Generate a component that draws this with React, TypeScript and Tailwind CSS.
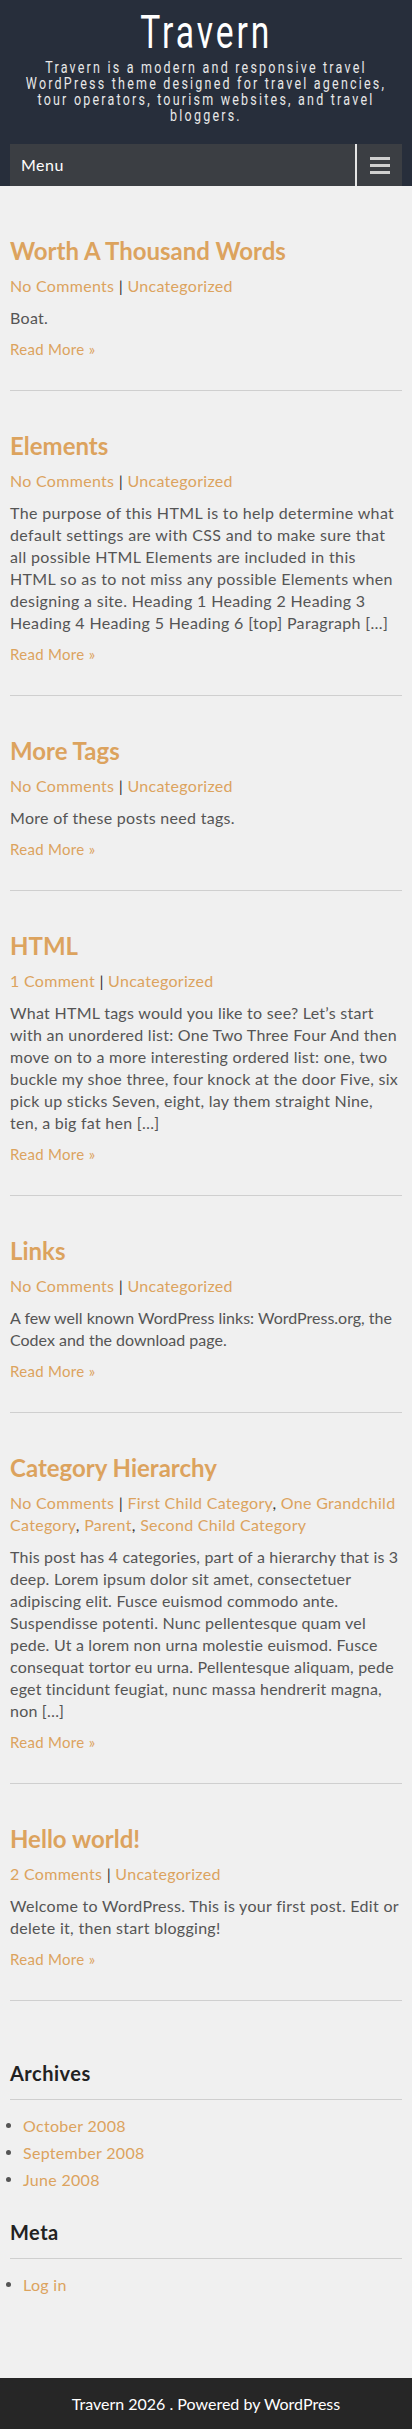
import React from "react";

const gold = "text-[#dca35e]";

type Post = {
  title: string;
  meta: React.ReactNode;
  body: string;
  track: string;
};

function Sep() {
  return <span className="text-[#333]"> | </span>;
}

const posts: Post[] = [
  {
    title: "Worth A Thousand Words",
    meta: (
      <>
        <a className={gold}>No Comments</a>
        <Sep />
        <a className={gold}>Uncategorized</a>
      </>
    ),
    body: "Boat.",
    track: "tracking-[0.3px]",
  },
  {
    title: "Elements",
    meta: (
      <>
        <a className={gold}>No Comments</a>
        <Sep />
        <a className={gold}>Uncategorized</a>
      </>
    ),
    body: "The purpose of this HTML is to help determine what default settings are with CSS and to make sure that all possible HTML Elements are included in this HTML so as to not miss any possible Elements when designing a site. Heading 1 Heading 2 Heading 3 Heading 4 Heading 5 Heading 6 [top] Paragraph […]",
    track: "tracking-[0.35px]",
  },
  {
    title: "More Tags",
    meta: (
      <>
        <a className={gold}>No Comments</a>
        <Sep />
        <a className={gold}>Uncategorized</a>
      </>
    ),
    body: "More of these posts need tags.",
    track: "tracking-[0.3px]",
  },
  {
    title: "HTML",
    meta: (
      <>
        <a className={gold}>1 Comment</a>
        <Sep />
        <a className={gold}>Uncategorized</a>
      </>
    ),
    body: "What HTML tags would you like to see? Let’s start with an unordered list: One Two Three Four And then move on to a more interesting ordered list: one, two buckle my shoe three, four knock at the door Five, six pick up sticks Seven, eight, lay them straight Nine, ten, a big fat hen […]",
    track: "tracking-[0.27px]",
  },
  {
    title: "Links",
    meta: (
      <>
        <a className={gold}>No Comments</a>
        <Sep />
        <a className={gold}>Uncategorized</a>
      </>
    ),
    body: "A few well known WordPress links: WordPress.org, the Codex and the download page.",
    track: "tracking-[0px]",
  },
  {
    title: "Category Hierarchy",
    meta: (
      <>
        <a className={gold}>No Comments</a>
        <Sep />
        <a className={gold}>First Child Category</a>,{" "}
        <a className={gold}>One Grandchild Category</a>,{" "}
        <a className={gold}>Parent</a>,{" "}
        <a className={gold}>Second Child Category</a>
      </>
    ),
    body: "This post has 4 categories, part of a hierarchy that is 3 deep. Lorem ipsum dolor sit amet, consectetuer adipiscing elit. Fusce euismod commodo ante. Suspendisse potenti. Nunc pellentesque quam vel pede. Ut a lorem non urna molestie euismod. Fusce consequat tortor eu urna. Pellentesque aliquam, pede eget tincidunt feugiat, nunc massa hendrerit magna, non […]",
    track: "tracking-[0.2px]",
  },
  {
    title: "Hello world!",
    meta: (
      <>
        <a className={gold}>2 Comments</a>
        <Sep />
        <a className={gold}>Uncategorized</a>
      </>
    ),
    body: "Welcome to WordPress. This is your first post. Edit or delete it, then start blogging!",
    track: "tracking-[0.3px]",
  },
];

function PostItem({ post }: { post: Post }) {
  return (
    <article className="pt-[40px] pb-[30px] border-b border-[#cfcfcf]">
      <h2 className={`text-[24px] leading-[30px] font-bold ${gold}`}>{post.title}</h2>
      <div className="mt-[9px] text-[16px] leading-[22px] tracking-[0.3px] text-[#333]">{post.meta}</div>
      <p className={`mt-[10px] text-[16px] leading-[22px] text-[#555] ${post.track}`}>{post.body}</p>
      <a className={`block mt-[9px] text-[15px] leading-[22px] tracking-[0.3px] ${gold}`}>Read More »</a>
    </article>
  );
}

function Widget({ title, items, className }: { title: string; items: string[]; className?: string }) {
  return (
    <section className={className}>
      <h3 className="text-[20px] leading-[28px] font-bold text-[#222] tracking-[0.5px] pb-[12px] border-b border-[#cfcfcf]">
        {title}
      </h3>
      <ul className="mt-[12px]">
        {items.map((it) => (
          <li key={it} className="flex items-center text-[16px] leading-[27px] tracking-[0.3px]">
            <span className="-ml-[4px] w-[5px] h-[5px] rounded-full bg-[#555]" />
            <a className={`ml-[12px] ${gold}`}>{it}</a>
          </li>
        ))}
      </ul>
    </section>
  );
}

export default function App() {
  return (
    <div className="min-h-screen bg-[#f0f0f0]" style={{ fontFamily: "Lato, 'Noto Sans', sans-serif" }}>
      <header className="bg-[#272e3b] pt-[4px] text-center overflow-hidden" style={{ fontFamily: "Roboto, sans-serif" }}>
        <h1 className="text-[46px] leading-[56px] text-white">
          <span className="inline-block tracking-[4px] scale-x-[0.73]">Travern</span>
        </h1>
        <div className="flex justify-center">
          <p className="shrink-0 w-[520px] scale-x-[0.78] text-[16px] leading-[16px] text-[#e8e8e8] tracking-[2.85px]">
            Travern is a modern and responsive travel
            <br />
            WordPress theme designed for travel agencies,
            <br />
            tour operators, tourism websites, and travel
            <br />
            bloggers.
          </p>
        </div>
        <nav className="mt-[20px] mx-[10px] h-[42px] bg-[#3b3e43] flex items-stretch" style={{ fontFamily: "Lato, sans-serif" }}>
          <span className="flex-1 flex items-center pl-[11px] text-[16px] text-white tracking-[0.5px]">Menu</span>
          <button className="w-[47px] border-l-2 border-[#e5e5e5] flex items-center justify-center">
            <span className="flex flex-col gap-[4px]">
              <span className="block w-[20px] h-[3px] bg-[#cfcfcf]" />
              <span className="block w-[20px] h-[3px] bg-[#cfcfcf]" />
              <span className="block w-[20px] h-[3px] bg-[#cfcfcf]" />
            </span>
          </button>
        </nav>
      </header>

      <main className="px-[10px] pt-[10px]">
        {posts.map((p) => (
          <PostItem key={p.title} post={p} />
        ))}

        <Widget className="mt-[58px]" title="Archives" items={["October 2008", "September 2008", "June 2008"]} />
        <Widget className="mt-[25px] pb-[80px]" title="Meta" items={["Log in"]} />
      </main>

      <footer className="bg-[#262626] h-[52px] flex items-center justify-center text-[16px] text-white">
        Travern 2026 . Powered by WordPress
      </footer>
    </div>
  );
}
